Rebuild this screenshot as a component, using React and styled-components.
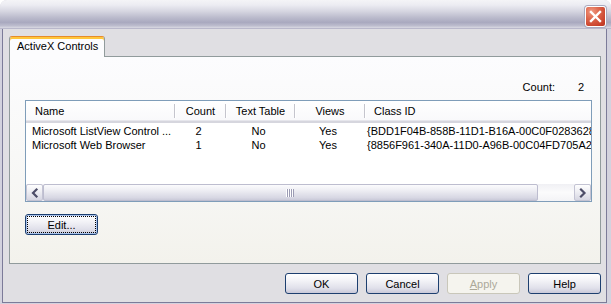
import styled, { createGlobalStyle } from "styled-components";

const GlobalStyle = createGlobalStyle`
  html, body {
    margin: 0;
    padding: 0;
    background: #fff;
  }
  body {
    font-family: "Liberation Sans", Arial, sans-serif;
    font-size: 11px;
    color: #000;
  }
`;

const Window = styled.div`
  width: 611px;
  height: 304px;
  display: flex;
  flex-direction: column;
  background: #d3d2de;
  border-radius: 7px 7px 0 0;
  overflow: hidden;
`;

const TitleBar = styled.div`
  height: 29px;
  flex-shrink: 0;
  box-sizing: border-box;
  display: flex;
  justify-content: flex-end;
  align-items: flex-start;
  padding: 6px 5px 0 0;
  border-bottom: 1px solid #b9b8cb;
  background: linear-gradient(
    to bottom,
    #f4f4f7 0%,
    #ececf2 18%,
    #d6d6e1 40%,
    #bcbccd 62%,
    #a9a9bf 80%,
    #bdbdce 92%,
    #d9d9e3 100%
  );
`;

const CloseButton = styled.div`
  width: 21px;
  height: 21px;
  box-sizing: border-box;
  border: 1px solid #fff;
  border-radius: 3px;
  box-shadow: 0 0 0 1px #a9a9bd;
  background: radial-gradient(circle at 30% 25%, #f09a82 0%, #df6a50 35%, #c8402a 80%, #b53622 100%);
  display: flex;
  align-items: center;
  justify-content: center;
`;

const Frame = styled.div`
  flex: 1;
  display: flex;
  min-height: 0;
  padding: 0 4px 1px 2px;
`;

const Client = styled.div`
  flex: 1;
  min-width: 0;
  display: flex;
  flex-direction: column;
  background: #e0dfe3;
  border: 1px solid #7c7b99;
  border-top: none;
  padding: 7px 5px 8px 6px;
`;

const TabStrip = styled.div`
  display: flex;
  position: relative;
  z-index: 1;
  margin-bottom: -1px;
`;

const Tab = styled.div`
  width: 96px;
  height: 21px;
  box-sizing: border-box;
  padding-left: 7px;
  line-height: 19px;
  border: 1px solid #919b9c;
  border-top-color: #e68b2c;
  border-bottom: none;
  border-radius: 3px 3px 0 0;
  box-shadow: inset 0 2px 0 #ffc73c;
  background: #fcfcfe;
`;

const Panel = styled.div`
  flex: 1;
  min-width: 0;
  display: flex;
  flex-direction: column;
  border: 1px solid #919b9c;
  background: linear-gradient(to bottom, #fcfcfe 0%, #f7f7f5 60%, #f3f2ec 100%);
  padding: 24px 8px 0 15px;
`;

const CountRow = styled.div`
  display: flex;
  justify-content: flex-end;
  line-height: 13px;
  padding-right: 8px;
  margin-bottom: 6px;
`;

const CountValue = styled.span`
  width: 29px;
  text-align: right;
`;

const ListView = styled.div`
  height: 102px;
  min-width: 0;
  box-sizing: border-box;
  border: 1px solid #7f9db9;
  background: #fff;
  display: flex;
  flex-direction: column;
  overflow: hidden;
`;

const HeaderRow = styled.div`
  display: flex;
  flex-shrink: 0;
  height: 22px;
  box-sizing: border-box;
  background: linear-gradient(to bottom, #ffffff, #f9f9fb);
  border-bottom: 2px solid #d6d6de;
  box-shadow: inset 0 -1px 0 #e6e6ec;
`;

const HeaderCell = styled.div`
  width: ${({ w }) => w}px;
  flex-shrink: 0;
  box-sizing: border-box;
  padding: 4px 0 0 ${({ pad }) => pad || 0}px;
  line-height: 13px;
  text-align: ${({ align }) => align || "left"};
  white-space: nowrap;
  overflow: hidden;
`;

const Divider = styled.div`
  width: 2px;
  height: 14px;
  flex-shrink: 0;
  margin-top: 3px;
  box-sizing: border-box;
  border-left: 1px solid #c5c5cd;
  border-right: 1px solid #fff;
`;

const Row = styled.div`
  display: flex;
  flex-shrink: 0;
  height: 14px;
  line-height: 14px;
  margin-top: ${({ first }) => (first ? "1px" : "0")};
`;

const Cell = styled.div`
  width: ${({ w }) => w}px;
  flex-shrink: 0;
  box-sizing: border-box;
  padding: 0 ${({ padR }) => padR || 0}px 0 ${({ pad }) => pad || 0}px;
  text-align: ${({ align }) => align || "left"};
  white-space: nowrap;
  overflow: hidden;
`;

const Spacer = styled.div`
  flex: 1;
`;

const ScrollBar = styled.div`
  display: flex;
  flex-shrink: 0;
  height: 17px;
  background: linear-gradient(to bottom, #f0f0f4, #fbfbfc 50%, #f3f3f6);
`;

const ScrollArrow = styled.div`
  width: 17px;
  height: 17px;
  flex-shrink: 0;
  box-sizing: border-box;
  border: 1px solid #c3c3d3;
  border-radius: 2px;
  background: linear-gradient(to bottom, #fefefe 0%, #eeeef3 45%, #d6d6e2 100%);
  display: flex;
  align-items: center;
  justify-content: center;
`;

const Thumb = styled.div`
  width: 495px;
  flex-shrink: 0;
  box-sizing: border-box;
  border: 1px solid #bdbdcf;
  border-radius: 2px;
  background: linear-gradient(to bottom, #fbfbfd 0%, #ececf2 40%, #d7d7e3 85%, #cacad9 100%);
  display: flex;
  align-items: center;
  justify-content: center;
`;

const Track = styled.div`
  flex: 1;
`;

const Button = styled.button`
  width: 73px;
  height: 21px;
  flex-shrink: 0;
  box-sizing: border-box;
  padding: 0;
  font-family: "Liberation Sans", Arial, sans-serif;
  font-size: 11px;
  color: #000;
  border: 1px solid #1d3f6f;
  border-radius: 3px;
  background: linear-gradient(to bottom, #ffffff 0%, #f3f3f7 35%, #e0e0ea 75%, #c9c9d9 100%);
  box-shadow: ${({ focused }) => (focused ? "inset 0 0 0 1px #a9c3ec" : "none")};
  outline: ${({ focused }) => (focused ? "1px dotted #000" : "none")};
  outline-offset: -3px;

  &:disabled {
    color: #aca899;
    border-color: #c9c7ba;
    background: #f5f4ee;
  }
`;

const EditButton = styled(Button)`
  margin-top: 12px;
  align-self: flex-start;
`;

const ButtonRow = styled.div`
  display: flex;
  justify-content: flex-end;
  gap: 8px;
  margin-top: 9px;
`;

const columns = [
  { title: "Name", w: 150, hPad: 9, align: "left", pad: 6 },
  { title: "Count", w: 51, align: "center", padR: 6 },
  { title: "Text Table", w: 69, align: "center", padR: 6 },
  { title: "Views", w: 70, align: "center", padR: 6 },
  { title: "Class ID", w: 225, hPad: 8, align: "left", pad: 1 },
];

const rows = [
  ["Microsoft ListView Control ...", "2", "No", "Yes", "{BDD1F04B-858B-11D1-B16A-00C0F0283628}"],
  ["Microsoft Web Browser", "1", "No", "Yes", "{8856F961-340A-11D0-A96B-00C04FD705A2}"],
];

function Chevron({ dir }) {
  const d = dir === "left" ? "M9.5 4.5 L6 8 L9.5 11.5" : "M6 4.5 L9.5 8 L6 11.5";
  return (
    <svg width="15" height="15" viewBox="0 0 15 15">
      <path d={d} fill="none" stroke="#4d4d68" strokeWidth="2.2" strokeLinecap="square" />
    </svg>
  );
}

function Grip() {
  return (
    <svg width="9" height="8" viewBox="0 0 9 8">
      {[0, 2, 4, 6].map((x) => (
        <g key={x}>
          <rect x={x} y="0" width="1" height="8" fill="#fff" />
          <rect x={x + 1} y="0" width="1" height="8" fill="#9c9cb4" />
        </g>
      ))}
    </svg>
  );
}

export default function App() {
  return (
    <>
      <GlobalStyle />
      <Window>
        <TitleBar>
          <CloseButton>
            <svg width="19" height="19" viewBox="0 0 19 19">
              <path d="M5 5 L14 14 M14 5 L5 14" stroke="#fff" strokeWidth="2.4" strokeLinecap="square" />
            </svg>
          </CloseButton>
        </TitleBar>
        <Frame>
          <Client>
            <TabStrip>
              <Tab>ActiveX Controls</Tab>
            </TabStrip>
            <Panel>
              <CountRow>
                <span>Count:</span>
                <CountValue>2</CountValue>
              </CountRow>
              <ListView>
                <HeaderRow>
                  {columns.map((c, i) => [
                    <HeaderCell key={c.title} w={i === columns.length - 1 ? c.w : c.w - 2} pad={c.hPad} align={c.align}>
                      {c.title}
                    </HeaderCell>,
                    i < columns.length - 1 ? <Divider key={c.title + "-d"} /> : null,
                  ])}
                </HeaderRow>
                {rows.map((r, ri) => (
                  <Row key={ri} first={ri === 0}>
                    {r.map((v, ci) => (
                      <Cell key={ci} w={columns[ci].w} pad={columns[ci].pad} padR={columns[ci].padR} align={columns[ci].align}>
                        {v}
                      </Cell>
                    ))}
                  </Row>
                ))}
                <Spacer />
                <ScrollBar>
                  <ScrollArrow>
                    <Chevron dir="left" />
                  </ScrollArrow>
                  <Thumb>
                    <Grip />
                  </Thumb>
                  <Track />
                  <ScrollArrow>
                    <Chevron dir="right" />
                  </ScrollArrow>
                </ScrollBar>
              </ListView>
              <EditButton focused>Edit...</EditButton>
            </Panel>
            <ButtonRow>
              <Button>OK</Button>
              <Button>Cancel</Button>
              <Button disabled>
                <u>A</u>pply
              </Button>
              <Button>Help</Button>
            </ButtonRow>
          </Client>
        </Frame>
      </Window>
    </>
  );
}
